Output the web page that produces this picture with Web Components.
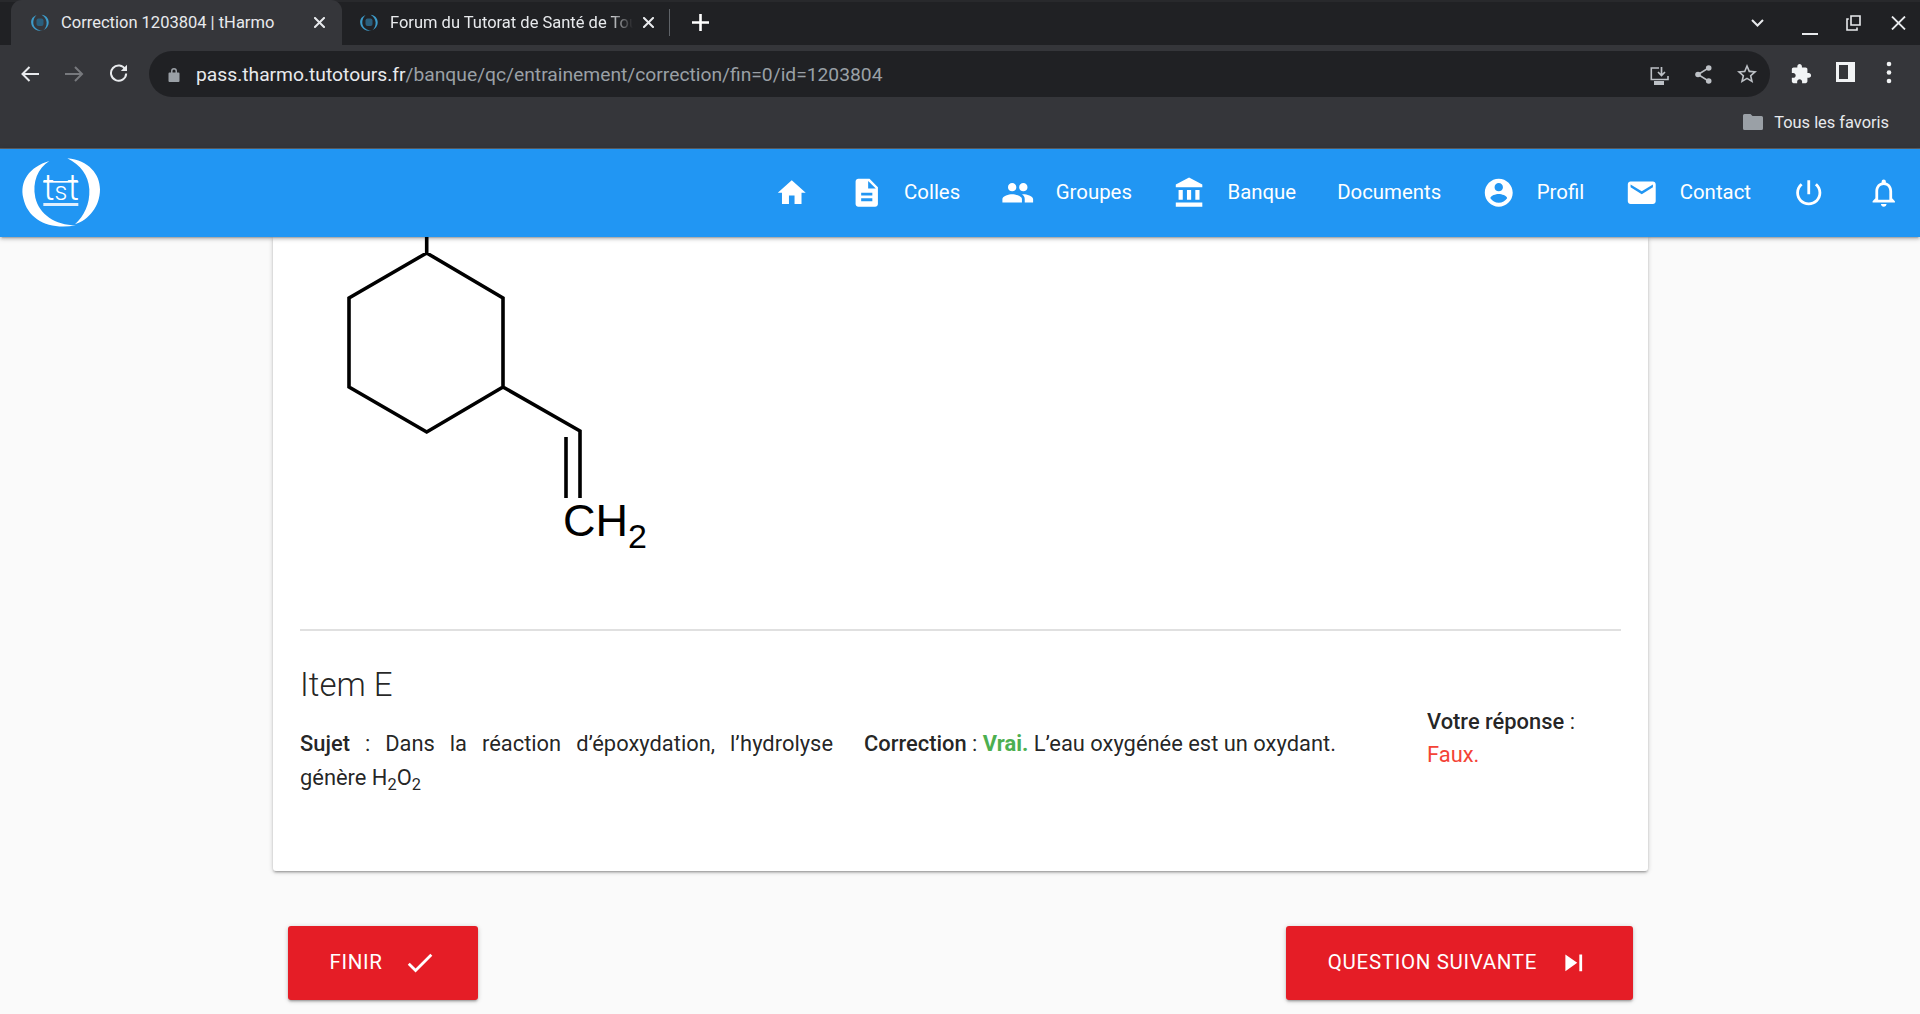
<!DOCTYPE html>
<html lang="fr">
<head>
<meta charset="utf-8">
<title>Correction 1203804 | tHarmo</title>
<style>
  html,body{margin:0;padding:0;height:1014px;overflow:hidden}
  body{display:flex;flex-direction:column;background:#fafafa;font-family:Roboto,"Liberation Sans",sans-serif}
</style>
</head>
<body>
<browser-chrome>
  <tab-item slot="tabs" active>Correction 1203804 | tHarmo</tab-item>
  <tab-item slot="tabs" fade>Forum du Tutorat de Santé de Tours</tab-item>
  <span slot="host">pass.tharmo.tutotours.fr</span><span slot="path">/banque/qc/entrainement/correction/fin=0/id=1203804</span>
  <span slot="bookmark">Tous les favoris</span>
</browser-chrome>
<app-navbar>
  <nav-item icon="home"></nav-item>
  <nav-item icon="description">Colles</nav-item>
  <nav-item icon="people">Groupes</nav-item>
  <nav-item icon="bank">Banque</nav-item>
  <nav-item>Documents</nav-item>
  <nav-item icon="account">Profil</nav-item>
  <nav-item icon="email">Contact</nav-item>
  <nav-item icon="power"></nav-item>
  <nav-item icon="bell"></nav-item>
</app-navbar>
<page-main>
  <quiz-card>
    <molecule-figure></molecule-figure>
    <item-correction>
      <span slot="title">Item E</span>
      <span slot="sujet"><strong style="font-weight:500">Sujet</strong> : Dans la réaction d’époxydation, l’hydrolyse génère H<sub style="font-size:.75em;line-height:0">2</sub>O<sub style="font-size:.75em;line-height:0">2</sub></span>
      <span slot="correction"><strong style="font-weight:500">Correction</strong> : <strong style="font-weight:700;color:#4caf50">Vrai.</strong> L’eau oxygénée est un oxydant.</span>
      <span slot="answer"><strong style="font-weight:500">Votre réponse</strong> :<br><span style="color:#f44336">Faux.</span></span>
    </item-correction>
  </quiz-card>
  <action-row>
    <action-button icon="check">Finir</action-button>
    <action-button icon="skip">Question suivante</action-button>
  </action-row>
</page-main>

<script>
const PATHS = {
  home:"M10 20v-6h4v6h5v-8h3L12 3 2 12h3v8z",
  description:"M14 2H6c-1.1 0-1.99.9-1.99 2L4 20c0 1.1.89 2 1.99 2H18c1.1 0 2-.9 2-2V8l-6-6zm2 16H8v-2h8v2zm0-4H8v-2h8v2zm-3-5V3.5L18.5 9H13z",
  people:"M16 11c1.66 0 2.99-1.34 2.99-3S17.66 5 16 5c-1.66 0-3 1.34-3 3s1.34 3 3 3zm-8 0c1.66 0 2.99-1.34 2.99-3S9.66 5 8 5C6.34 5 5 6.34 5 8s1.34 3 3 3zm0 2c-2.33 0-7 1.17-7 3.5V19h14v-2.5c0-2.33-4.67-3.5-7-3.5zm8 0c-.29 0-.62.02-.97.05 1.16.84 1.97 1.97 1.97 3.45V19h6v-2.5c0-2.33-4.67-3.5-7-3.5z",
  bank:"M4 10v7h3v-7H4zm6 0v7h3v-7h-3zM2 22h19v-3H2v3zm14-12v7h3v-7h-3zm-4.5-9L2 6v2h19V6l-9.5-5z",
  account:"M12 2C6.48 2 2 6.48 2 12s4.48 10 10 10 10-4.48 10-10S17.52 2 12 2zm0 3c1.66 0 3 1.34 3 3s-1.34 3-3 3-3-1.34-3-3 1.34-3 3-3zm0 14.2c-2.5 0-4.71-1.28-6-3.22.03-1.99 4-3.08 6-3.08 1.99 0 5.97 1.09 6 3.08-1.29 1.94-3.5 3.22-6 3.22z",
  email:"M20 4H4c-1.1 0-1.99.9-1.99 2L2 18c0 1.1.9 2 2 2h16c1.1 0 2-.9 2-2V6c0-1.1-.9-2-2-2zm0 4l-8 5-8-5V6l8 5 8-5v2z",
  power:"M13 3h-2v10h2V3zm4.83 2.17l-1.42 1.42C17.99 7.86 19 9.81 19 12c0 3.87-3.13 7-7 7s-7-3.13-7-7c0-2.19 1.01-4.14 2.58-5.42L6.17 5.17C4.23 6.82 3 9.26 3 12c0 4.97 4.03 9 9 9s9-4.03 9-9c0-2.74-1.23-5.18-3.17-6.83z",
  bell:"M12 22c1.1 0 2-.9 2-2h-4c0 1.1.9 2 2 2zm6-6v-5c0-3.07-1.63-5.64-4.5-6.32V4c0-.83-.67-1.5-1.5-1.5s-1.5.67-1.5 1.5v.68C7.64 5.36 6 7.92 6 11v5l-2 2v1h16v-1l-2-2zm-2 1H8v-6c0-2.48 1.51-4.5 4-4.5s4 2.02 4 4.5v6z",
  check:"M9 16.17L4.83 12l-1.42 1.41L9 19 21 7l-1.41-1.41z",
  skip:"M6 18l8.5-6L6 6v12zM16 6v12h2V6h-2z",
  star:"M22 9.24l-7.19-.62L12 2 9.19 8.63 2 9.24l5.46 4.73L5.82 21 12 17.27 18.18 21l-1.63-7.03L22 9.24zM12 15.4l-3.76 2.27 1-4.28-3.32-2.88 4.38-.38L12 6.1l1.71 4.04 4.38.38-3.32 2.88 1 4.28L12 15.4z",
  puzzle:"M20.5 11H19V7c0-1.1-.9-2-2-2h-4V3.5C13 2.12 11.88 1 10.5 1S8 2.12 8 3.5V5H4c-1.1 0-1.99.9-1.99 2v3.8H3.5c1.49 0 2.7 1.21 2.7 2.7s-1.21 2.7-2.7 2.7H2V20c0 1.1.9 2 2 2h3.8v-1.5c0-1.49 1.21-2.7 2.7-2.7 1.49 0 2.7 1.21 2.7 2.7V22H17c1.1 0 2-.9 2-2v-4h1.5c1.38 0 2.5-1.12 2.5-2.5S21.88 11 20.5 11z"
};
const CRESCENTS = `<path d="M118 30C58 48 28 90 40 142C54 208 120 238 198 223C135 222 88 190 76 140C66 92 84 52 118 30Z"/><path d="M172 22C236 28 270 70 270 115C270 167 236 207 195 220C222 195 240 160 238 115C235 72 212 42 172 22Z"/>`;

customElements.define('m-icon', class extends HTMLElement {
  connectedCallback(){
    if(this.shadowRoot) return;
    const s = this.getAttribute('size') || 33.5;
    this.attachShadow({mode:'open'}).innerHTML =
      `<style>:host{display:block;width:${s}px;height:${s}px;flex:none}svg{display:block;width:100%;height:100%;fill:currentColor}</style>
       <svg viewBox="0 0 24 24"><path d="${PATHS[this.getAttribute('name')]||''}"/></svg>`;
  }
});

customElements.define('tab-item', class extends HTMLElement {
  constructor(){
    super();
    this.attachShadow({mode:'open'}).innerHTML = `<style>
      :host{display:flex;align-items:center;box-sizing:border-box;height:45px;width:321px;padding:0 8px 0 17px;color:#e8eaed;font-size:16.5px;position:relative}
      :host([active]){width:331px;padding:0 16px 0 19px;background:#35363a;border-radius:11px 11px 0 0}
      svg.fav{width:20px;height:18px;flex:none;margin-right:11px;margin-top:1px}
      .t{flex:1;white-space:nowrap;overflow:hidden;min-width:0}
      :host([fade]) .t{-webkit-mask-image:linear-gradient(90deg,#000 90%,transparent 100%);mask-image:linear-gradient(90deg,#000 90%,transparent 100%)}
      svg.x{width:11px;height:11px;flex:none;margin:0 1px 0 10px;stroke:#e8eaed;stroke-width:2;stroke-linecap:square}
    </style>
    <svg class="fav" viewBox="0 0 20 18"><path fill="#3d9bc9" d="M6.500 1.200C2.800 2.300 .8 5.200 1.200 8.900 1.700 13.600 6 17.300 12.800 16.900 8 16.300 3.600 13.600 3.300 9.200 3.100 6 4.300 3 6.500 1.200ZM11.500.8C15.800 1.200 18.600 4.200 18.700 8.100 18.800 11.800 16.600 15 13.400 16.200 15.500 14.300 16.800 11.500 16.600 8.200 16.300 5.200 14.500 2.600 11.500.8Z"/><rect x="6.500" y="4.500" width="7" height="7.500" rx="2" fill="#2a5f7d"/></svg>
    <span class="t"><slot></slot></span>
    <svg class="x" viewBox="0 0 11 11"><path d="M1 1L10 10M10 1L1 10"/></svg>`;
  }
});

customElements.define('browser-chrome', class extends HTMLElement {
  constructor(){
    super();
    this.attachShadow({mode:'open'}).innerHTML = `<style>
      :host{display:block;flex:none;background:#35363a;color:#e8eaed;font-family:Roboto,"Liberation Sans",sans-serif}
      svg{display:block;flex:none}
      .strip{display:flex;align-items:center;height:45px;background:#202124;padding-left:11px;box-sizing:border-box;box-shadow:inset 0 2px 0 #28292c}
      .sep{width:1px;height:27px;background:#5f6368;margin-left:5.5px;flex:none}
      .plus{margin-left:22px;stroke:#fff;stroke-width:2.6;width:17px;height:17px}
      .grow{flex:1}
      .chev{fill:none;stroke:#e8eaed;stroke-width:2;margin-right:38px}
      .min{margin-right:28px}.rest{margin-right:30px;fill:none;stroke:#e8eaed;stroke-width:1.6}
      .close{margin-right:14px;stroke:#e8eaed;stroke-width:1.8}
      .bar{display:flex;align-items:center;height:58px;padding:0 0 0 21px}
      .bar .nav{fill:none;stroke:#e8eaed;stroke-width:2}
      .omni{display:flex;align-items:center;width:1621px;height:46px;margin:0 0 0 21px;border-radius:23px;background:#202124;box-sizing:border-box;padding-left:19px;flex:none;color:#bdc1c6}
      .url{margin-left:16px;font-size:19.25px;white-space:nowrap;color:#e8eaed;position:relative;top:.5px}
      .url .p{color:#9aa0a6}
      .omni .grow{flex:1}
      .marks{display:flex;align-items:center;justify-content:flex-end;box-sizing:border-box;height:46px;padding:0 31px 6px 0;border-bottom:1px solid #5f6063;font-size:16.4px}
      .marks svg{margin-right:11px;margin-top:-1px}
    </style>
    <div class="strip" part="strip">
      <slot name="tabs"></slot>
      <div class="sep"></div>
      <svg class="plus" viewBox="0 0 17 17"><path d="M8.5 0V17M0 8.5H17"/></svg>
      <div class="grow"></div>
      <svg class="chev" width="13" height="8" viewBox="0 0 13 8"><path d="M1 1L6.5 6.5L12 1"/></svg>
      <svg class="min" width="16" height="14" viewBox="0 0 16 14" style="margin-top:14px"><rect x="0" y="10" width="16" height="2" fill="#e8eaed"/></svg>
      <svg class="rest" width="15" height="16" viewBox="0 0 15 16"><path d="M5 1H14V10H5ZM2.800 4H1V15H11V12.500"/></svg>
      <svg class="close" width="15" height="14" viewBox="0 0 15 14"><path d="M1 .5L14 13.5M14 .5L1 13.5"/></svg>
    </div>
    <div class="bar">
      <svg class="nav" width="18" height="16" viewBox="0 0 18 16"><path d="M1.5 8H18M8.5 1L1.5 8L8.5 15"/></svg>
      <svg class="nav" width="19" height="16" viewBox="0 0 19 16" style="margin-left:26px;stroke:#77797d"><path d="M0 8H17M10 1L17 8L10 15"/></svg>
      <svg class="nav" width="19" height="18" viewBox="0 0 19 18" style="margin-left:25px;margin-top:-3px"><path d="M16.3 5.5A7.6 7.6 0 1 0 17.2 9.5"/><path d="M18 .8V7H11.8Z" fill="#e8eaed" stroke="none"/></svg>
      <div class="omni">
        <svg width="12" height="15" viewBox="0 0 12 15" style="margin-top:1px"><path fill="#9aa0a6" d="M1.5 5.5H3V4a3 3 0 0 1 6 0v1.5h1.5a1 1 0 0 1 1 1V14a1 1 0 0 1-1 1h-9a1 1 0 0 1-1-1V6.500a1 1 0 0 1 1-1zM4.500 5.500h3V4a1.500 1.500 0 0 0-3 0z"/></svg>
        <span class="url"><slot name="host"></slot><span class="p"><slot name="path"></slot></span></span>
        <div class="grow"></div>
        <svg width="19" height="18" viewBox="0 0 19 18" style="margin-top:3px"><path d="M9 1H1.300V12.500H18V9" fill="none" stroke="#bdc1c6" stroke-width="1.600"/><path d="M11.500 0V8M8 5L11.500 8.500L15 5" fill="none" stroke="#bdc1c6" stroke-width="1.700"/><rect x="4" y="14" width="10" height="4" fill="#bdc1c6"/></svg>
        <svg width="17" height="19" viewBox="0 0 17 19" style="margin-left:26px"><path d="M13.500 3L3 9.500L13.500 16" fill="none" stroke="#bdc1c6" stroke-width="1.500"/><circle cx="13.700" cy="3" r="2.800" fill="#bdc1c6"/><circle cx="3" cy="9.500" r="2.800" fill="#bdc1c6"/><circle cx="13.700" cy="16" r="2.800" fill="#bdc1c6"/></svg>
        <m-icon name="star" size="24" style="margin:0 11px 0 23px"></m-icon>
      </div>
      <m-icon name="puzzle" size="22" style="margin-left:20px;color:#f1f3f4"></m-icon>
      <svg width="19" height="20" viewBox="0 0 19 20" style="margin-left:24px;margin-top:-4px"><path fill-rule="evenodd" fill="#f1f3f4" d="M0 0H19V20H0ZM3 3V17H12V3Z"/></svg>
      <svg width="6" height="23" viewBox="0 0 6 23" style="margin-left:31px;margin-top:-3px"><g fill="#f1f3f4"><circle cx="3" cy="3" r="2.300"/><circle cx="3" cy="11.500" r="2.300"/><circle cx="3" cy="20" r="2.300"/></g></svg>
    </div>
    <div class="marks">
      <svg width="20" height="16" viewBox="0 0 20 16"><path fill="#9aa0a6" d="M1.500 0H7.500L9.500 2H18.500A1.500 1.500 0 0 1 20 3.500V14.500A1.500 1.500 0 0 1 18.500 16H1.500A1.500 1.500 0 0 1 0 14.500V1.500A1.500 1.500 0 0 1 1.500 0Z"/></svg>
      <slot name="bookmark"></slot>
    </div>`;
  }
});

customElements.define('app-navbar', class extends HTMLElement {
  constructor(){
    super();
    this.attachShadow({mode:'open'}).innerHTML = `<style>
      :host{display:flex;align-items:center;flex:none;height:88px;background:#2196f3;color:#fff;position:relative;z-index:2;
        box-shadow:0 2px 3px 0 rgba(0,0,0,.14),0 3px 1px -2px rgba(0,0,0,.12),0 1px 6px 0 rgba(0,0,0,.2);font-size:20.4px}
      svg{display:block;width:100px;height:85px;flex:none;margin:0 0 0 10px}
      .logo-t{font-family:Roboto,sans-serif;font-weight:300;font-size:108px;fill:#fff}
      nav{flex:1;display:flex;justify-content:flex-end;align-items:center;height:100%;margin-right:-.5px}
    </style>
    <svg viewBox="0 0 300 255"><g fill="#fff">${CRESCENTS}</g>
      <text class="logo-t" x="99" y="146" textLength="108" lengthAdjust="spacingAndGlyphs">t<tspan font-size="76">s</tspan>t</text>
      <rect x="100" y="90" width="105" height="5" fill="#fff"/>
      <rect x="100" y="156" width="105" height="9" fill="#fff" opacity=".85"/></svg>
    <nav><slot></slot></nav>`;
  }
});

customElements.define('nav-item', class extends HTMLElement {
  connectedCallback(){
    if(this.shadowRoot) return;
    const ic = this.getAttribute('icon');
    const hasText = this.textContent.trim().length>0;
    this.attachShadow({mode:'open'}).innerHTML = `<style>
      :host{display:flex;align-items:center;padding:0 20.5px;gap:21px;height:100%}
      span{white-space:nowrap;margin-top:-2px;display:block}
    </style>${ic?`<m-icon name="${ic}"></m-icon>`:''}${hasText?'<span><slot></slot></span>':''}`;
  }
});

customElements.define('page-main', class extends HTMLElement {
  constructor(){
    super();
    this.attachShadow({mode:'open'}).innerHTML = `<style>
      :host{display:block;flex:1;min-height:0;overflow:hidden;background:#fafafa;color:rgba(0,0,0,.87)}
    </style><slot></slot>`;
  }
});

customElements.define('quiz-card', class extends HTMLElement {
  constructor(){
    super();
    this.attachShadow({mode:'open'}).innerHTML = `<style>
      :host{display:block;box-sizing:border-box;width:1375px;margin:0 auto;padding:0 27px 77px;background:#fff;border-radius:0 0 3px 3px;
        box-shadow:0 2px 2px 0 rgba(0,0,0,.14),0 3px 1px -2px rgba(0,0,0,.12),0 1px 5px 0 rgba(0,0,0,.2)}
    </style><slot></slot>`;
  }
});

customElements.define('molecule-figure', class extends HTMLElement {
  constructor(){
    super();
    this.attachShadow({mode:'open'}).innerHTML = `<style>
      :host{display:block;height:392px;border-bottom:2px solid #e0e0e0}
      svg{display:block}
      text{font-family:"Liberation Sans",Arial,sans-serif;fill:#000}
    </style>
    <svg width="360" height="392" viewBox="300 237 360 392">
      <path fill="none" stroke="#000" stroke-width="3.600" stroke-linejoin="miter" d="M426.700 237V253L503 298V387L426.700 432L349 387V298L426.700 253M503 387L580 431V498M566 437V498"/>
      <text x="563" y="536" font-size="45">CH<tspan dy="12" font-size="34">2</tspan></text>
    </svg>`;
  }
});

customElements.define('item-correction', class extends HTMLElement {
  constructor(){
    super();
    this.attachShadow({mode:'open'}).innerHTML = `<style>
      :host{display:grid;grid-template-columns:533px 532px 194px;column-gap:31px;font-size:21.9px;line-height:33.6px;font-weight:400;padding:34px 0 0 .5px}
      .title{grid-column:1/3;font-size:33px;font-weight:300;line-height:39px;margin-bottom:23px}
      .sujet{grid-column:1;text-align:justify}
      .corr{grid-column:2}
      .ans{grid-column:3;grid-row:1/3;margin-top:39.500px}
    </style>
    <div class="title"><slot name="title"></slot></div>
    <div class="sujet"><slot name="sujet"></slot></div>
    <div class="corr"><slot name="correction"></slot></div>
    <div class="ans"><slot name="answer"></slot></div>`;
  }
});

customElements.define('action-row', class extends HTMLElement {
  constructor(){
    super();
    this.attachShadow({mode:'open'}).innerHTML = `<style>
      :host{display:flex;justify-content:space-between;width:1345px;margin:55px auto 0}
    </style><slot></slot>`;
  }
});

customElements.define('action-button', class extends HTMLElement {
  connectedCallback(){
    if(this.shadowRoot) return;
    this.attachShadow({mode:'open'}).innerHTML = `<style>
      :host{display:inline-flex;align-items:center;gap:20px;box-sizing:border-box;height:74px;padding:0 42px;background:#e51d26;color:#fff;border-radius:3px;
        text-transform:uppercase;font-size:20.5px;letter-spacing:.67px;white-space:nowrap;
        box-shadow:0 2px 2px 0 rgba(0,0,0,.14),0 3px 1px -2px rgba(0,0,0,.12),0 1px 5px 0 rgba(0,0,0,.2)}
      span{margin-top:-2px}
    </style><span><slot></slot></span><m-icon name="${this.getAttribute('icon')}"></m-icon>`;
  }
});
</script>
</body>
</html>
